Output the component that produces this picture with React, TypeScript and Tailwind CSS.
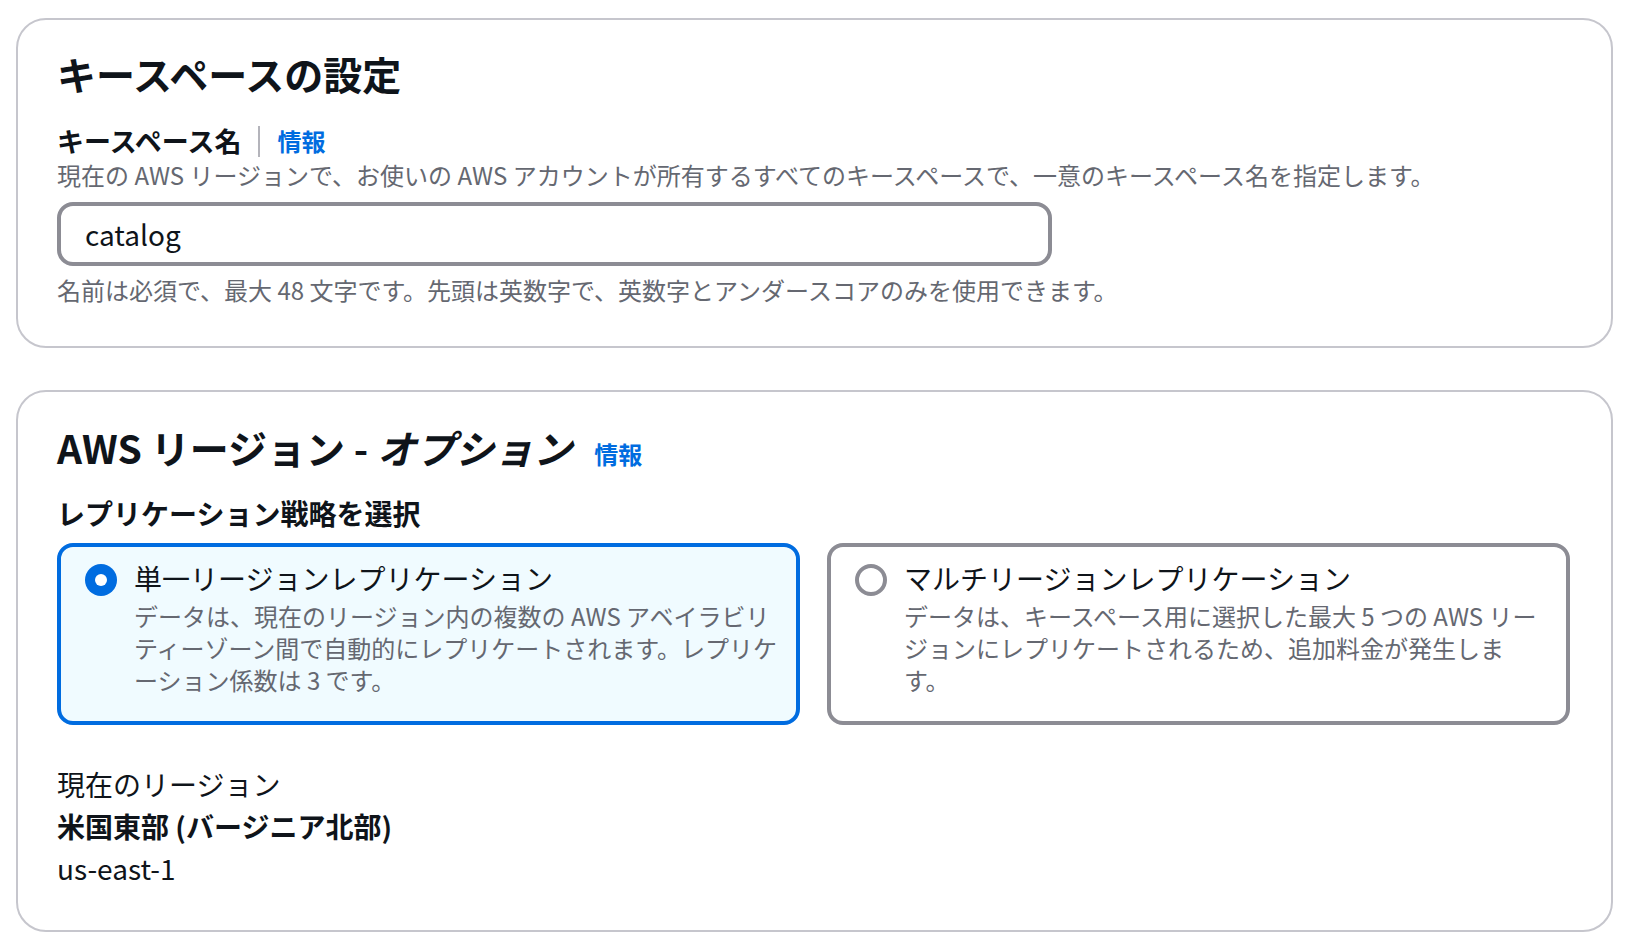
import React from 'react';

const font = '"Noto Sans CJK JP", "Open Sans", sans-serif';

function InfoLink() {
  return <a className="text-[24px] font-bold leading-[32px] text-[#006ce0]">情報</a>;
}

function Radio({ checked }: { checked: boolean }) {
  if (checked) {
    return (
      <div className="mt-[5px] flex h-[32px] w-[32px] shrink-0 items-center justify-center rounded-full bg-[#006ce0]">
        <div className="h-[12px] w-[12px] rounded-full bg-white" />
      </div>
    );
  }
  return <div className="mt-[5px] h-[32px] w-[32px] shrink-0 rounded-full border-[4px] border-[#8c8c94] bg-white" />;
}

function Tile({ checked, title, children }: { checked: boolean; title: string; children: React.ReactNode }) {
  return (
    <div
      className={
        checked
          ? 'flex gap-[17px] rounded-[16px] border-4 border-[#006ce0] bg-[#f0fbff] pb-[25px] pl-[24px] pr-[14px] pt-[12px]'
          : 'flex gap-[17px] rounded-[16px] border-4 border-[#8c8c94] bg-white pb-[25px] pl-[24px] pr-[14px] pt-[12px]'
      }
    >
      <Radio checked={checked} />
      <div>
        <div className="text-[28px] leading-[38px] text-[#0f141a]">{title}</div>
        <div className="mt-[3px] text-[24px] leading-[32px] text-[#656871]">{children}</div>
      </div>
    </div>
  );
}

export default function App() {
  return (
    <div className="min-h-screen bg-white pl-[16px] pr-[17px] pt-[18px] text-[#0f141a]" style={{ fontFamily: font }}>
      {/* Keyspace settings */}
      <div className="rounded-[30px] border-2 border-[#c6c6cd] px-[39px] pb-[40px] pt-[30px]">
        <h2 className="text-[39px] font-bold leading-[46px]">キースペースの設定</h2>
        <div className="mt-[27px] flex items-center">
          <span className="text-[27px] font-bold leading-[36px]">キースペース名</span>
          <span className="mx-[17px] h-[31px] w-[2px] bg-[#b4b4bb]" />
          <InfoLink />
        </div>
        <p className="text-[24px] leading-[32px] text-[#656871]">
          現在の AWS リージョンで、お使いの AWS アカウントが所有するすべてのキースペースで、一意のキースペース名を指定します。
        </p>
        <input
          className="mt-[11px] h-[64px] w-[995px] rounded-[16px] border-4 border-[#8c8c94] px-[24px] text-[28px] text-[#0f141a] outline-none"
          defaultValue="catalog"
          style={{ fontFamily: font }}
        />
        <p className="mt-[8px] text-[24px] leading-[32px] text-[#656871]">
          名前は必須で、最大 48 文字です。先頭は英数字で、英数字とアンダースコアのみを使用できます。
        </p>
      </div>

      {/* AWS Region */}
      <div className="mt-[42px] rounded-[30px] border-2 border-[#c6c6cd] px-[39px] pb-[41px] pt-[32px]">
        <div className="flex items-baseline">
          <h2 className="text-[39px] font-bold leading-[46px]">
            AWS リージョン - <i>オプション</i>
          </h2>
          <span className="ml-[22px]">
            <InfoLink />
          </span>
        </div>
        <div className="mt-[25px] text-[28px] font-bold leading-[36px]">レプリケーション戦略を選択</div>
        <div className="mt-[12px] grid w-[1513px] grid-cols-2 gap-[27px]">
          <Tile checked title="単一リージョンレプリケーション">
            データは、現在のリージョン内の複数の AWS アベイラビリティーゾーン間で自動的にレプリケートされます。レプリケーション係数は 3 です。
          </Tile>
          <Tile checked={false} title="マルチリージョンレプリケーション">
            データは、キースペース用に選択した最大 5 つの AWS リージョンにレプリケートされるため、追加料金が発生しま
            <br />
            す。
          </Tile>
        </div>
        <div className="mt-[38px] text-[28px] leading-[42px]">
          <div>現在のリージョン</div>
          <div className="font-bold">米国東部 (バージニア北部)</div>
          <div>us-east-1</div>
        </div>
      </div>
    </div>
  );
}
